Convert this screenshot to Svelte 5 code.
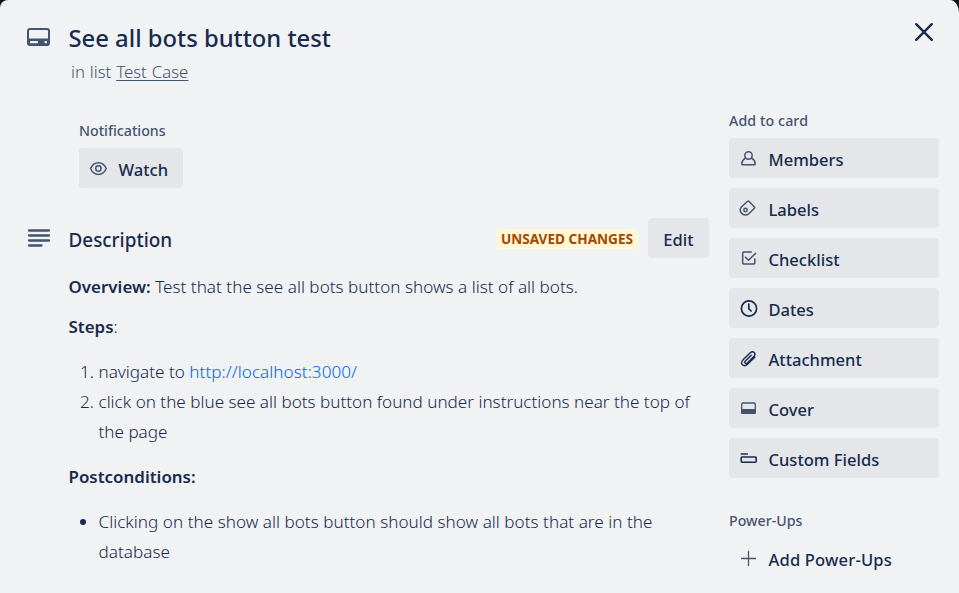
<script>
  const actions = ['Members', 'Labels', 'Checklist', 'Dates', 'Attachment', 'Cover', 'Custom Fields'];
</script>

{#snippet icon(name)}
  <svg class="icon" class:dark={['Dates', 'Attachment', 'Custom Fields'].includes(name)} viewBox="0 0 20 20" width="20" height="20" fill="none" stroke="currentColor" stroke-width="1.5" stroke-linecap="round" stroke-linejoin="round">
    {#if name === 'Members'}
      <circle cx="9.5" cy="6.5" r="3.7" />
      <path d="M6.4 9.1C4 10.6 2.8 12.7 2.8 14.7Q2.8 15.8 4 15.8H15Q16.2 15.8 16.2 14.7C16.2 12.7 15 10.6 12.6 9.1" />
    {:else if name === 'Labels'}
      <path d="M8.7 2.2Q9.3 1.6 9.9 2.2L15.4 7.9Q16 8.6 15.4 9.2L9.8 14.7A5 5 0 0 1 2.6 14.3A5 5 0 0 1 2.6 7.7Z" />
      <circle cx="6.5" cy="11" r="1.7" />
    {:else if name === 'Checklist'}
      <path d="M12.3 2.9H4.7Q3.7 2.9 3.7 3.9V14Q3.7 15 4.7 15H14.8Q15.8 15 15.8 14V10" />
      <path d="M6.5 8.3L9.5 11.3L16.5 4.4" />
    {:else if name === 'Dates'}
      <circle cx="10" cy="9.5" r="7.6" stroke-width="1.7" />
      <path d="M9.8 5V9.7L12.1 12" stroke-width="1.7" />
    {:else if name === 'Attachment'}
      <path d="M12.2 5.8L6.4 11.5Q5.2 12.9 6.3 13.8Q7.3 14.5 8.6 13.3L14.8 7.2Q17 4.8 15.2 3.1Q13.3 1.4 11 3.6L4.3 10.2Q1.4 13.4 3.4 15.4Q5.6 17.4 8.7 14.7L15.8 7.9" transform="translate(0 .4)" stroke-width="1.4" />
    {:else if name === 'Cover'}
      <rect x="2.7" y="4" width="13.6" height="10.3" rx="1.2" stroke-width="1.3" />
      <path d="M2.1 10H16.9V13.8Q16.9 15 15.7 15H3.3Q2.1 15 2.1 13.8Z" fill="currentColor" stroke="none" />
    {:else if name === 'Custom Fields'}
      <path d="M2.2 5H8.4" stroke-width="1.4" />
      <rect x="2.2" y="8" width="15" height="5.2" rx="1" stroke-width="1.6" />
    {:else if name === 'Watch'}
      <path d="M2.1 9.5C3.7 6.1 6.5 3.7 10 3.7S16.3 6.1 17.9 9.5C16.3 13 13.5 15.4 10 15.4S3.7 13 2.1 9.5Z" transform="translate(-.6 0)" />
      <circle cx="9.4" cy="9.5" r="2.7" />
    {:else if name === 'Add'}
      <path d="M9.5 2.5V16.5M2.5 9.5H16.5" stroke-width="1.3" />
    {/if}
  </svg>
{/snippet}

<div class="dialog">
  <header>
    <svg class="card-icon" viewBox="0 0 24 18" width="24" height="18">
      <rect x="1" y="1" width="21" height="16" rx="2" fill="none" stroke="#44546f" stroke-width="2" />
      <path d="M1 10.5H22V17H1Z" fill="#44546f" />
      <rect x="3" y="13" width="8" height="2.2" rx=".6" fill="#f1f2f4" />
      <rect x="17.5" y="13" width="2.5" height="2.2" rx=".6" fill="#f1f2f4" />
    </svg>
    <div class="heading">
      <h1>See all bots button test</h1>
      <p class="list">in list <u>Test Case</u></p>
    </div>
    <svg class="close" viewBox="0 0 20 20" width="20" height="20" stroke="#172b4d" stroke-width="2.4" stroke-linecap="round"><path d="M2.2 2.2L17.8 17.8M17.8 2.2L2.2 17.8" /></svg>
  </header>

  <div class="columns">
    <main>
      <section class="notifications">
        <h3>Notifications</h3>
        <button class="watch">{@render icon('Watch')}<span>Watch</span></button>
      </section>

      <div class="desc-head">
        <svg class="lines" viewBox="0 0 24 20" width="24" height="20" stroke="#44546f" stroke-width="2.3" stroke-linecap="round"><path d="M2 2.5H22M2 7.5H22M2 12.5H22M2 17.5H14.5" /></svg>
        <h2>Description</h2>
        <strong class="unsaved">UNSAVED CHANGES</strong>
        <button class="edit"><span>Edit</span></button>
      </div>

      <div class="description">
        <p><b>Overview:</b> Test that the see all bots button shows a list of all bots.</p>
        <p><b>Steps</b>:</p>
        <ol>
          <li>navigate to <a href="#localhost">http://localhost:3000/</a></li>
          <li>click on the blue see all bots button found under instructions near the top of<br />the page</li>
        </ol>
        <p><b>Postconditions:</b></p>
        <ul>
          <li>Clicking on the show all bots button should show all bots that are in the<br />database</li>
        </ul>
      </div>
    </main>

    <aside>
      <h3>Add to card</h3>
      <div class="actions">
        {#each actions as action}
          <button>{@render icon(action)}<span>{action}</span></button>
        {/each}
      </div>
      <h3 class="power">Power-Ups</h3>
      <button class="add">{@render icon('Add')}<span>Add Power-Ups</span></button>
    </aside>
  </div>
</div>

<style>
  :global(body) { background: #101214; }
  * { box-sizing: border-box; }
  .dialog {
    width: 959px;
    height: 593px;
    overflow: hidden;
    background: #f1f2f4;
    border-radius: 8px 9px 0 0 / 8px 13px 0 0;
    color: #172b4d;
    font: 400 17px/30px "Noto Sans", "Open Sans", sans-serif;
  }
  h1, h2, h3, p, ol, ul { margin: 0; padding: 0; white-space: nowrap; }
  header { display: flex; height: 110px; padding-left: 27px; }
  .card-icon { margin-top: 28px; }
  .heading { margin-left: 17.5px; flex: 1; }
  h1 { margin-top: 22px; font-size: 23.8px; line-height: 32px; font-weight: 500; }
  .list { margin: 3px 0 0 2.5px; color: #44546f; font-size: 16.8px; font-weight: 300; word-spacing: .6px; }
  .list u { text-underline-offset: 2px; text-decoration-thickness: 1px; }
  .close { margin: 22px 25px 0 0; }
  .columns { display: flex; }
  main { width: 682px; margin-left: 27px; }
  h3 { height: 20px; font-size: 14.2px; line-height: 20px; font-weight: 500; color: #44546f; }
  .notifications { padding: 11px 0 0 52px; }
  button {
    display: flex;
    align-items: center;
    width: 210px;
    height: 40px;
    padding: 2px 0 0 10px;
    border: 0;
    border-radius: 4px;
    background: #e4e6ea;
    color: #172b4d;
    font: 500 16.55px/24px "Noto Sans", "Open Sans", sans-serif;
    white-space: nowrap;
  }
  button span { padding-top: 1px; }
  .icon { flex: none; margin-top: -1px; margin-right: 9.5px; color: #44546f; }
  .icon.dark { color: #172b4d; }
  .watch { width: 104px; margin-top: 7px; }
  .desc-head { display: flex; align-items: center; height: 40px; margin-top: 30px; }
  h2 { margin: 5px 0 0 17.5px; font-size: 18.9px; line-height: 25px; font-weight: 500; }
  .unsaved { margin-left: auto; margin-top: 1px; width: 142px; height: 20px; border-radius: 4px; background: #fff7d6; color: #a54800; font-size: 13.6px; line-height: 20px; text-align: center; }
  .edit { width: 61px; margin-left: 10px; padding-left: 0; justify-content: center; }
  .description { padding: 14px 0 0 41.5px; font-size: 17.1px; font-weight: 300; }
  .description p { height: 30px; margin-bottom: 10px; letter-spacing: .02px; }
  b { font-weight: 600; font-size: 16.9px; }
  ol, ul { margin: 15px 0; padding-left: 30px; }
  ul { letter-spacing: .03px; }
  a { color: #0065f0; text-decoration: none; letter-spacing: .05px; }
  aside { margin-left: 20px; width: 210px; }
  aside h3 { margin-top: 1px; letter-spacing: .1px; }
  .actions { display: flex; flex-direction: column; gap: 10px; margin-top: 7px; }
  aside h3.power { margin-top: 33px; letter-spacing: 0; }
  .add { margin-top: 7px; background: transparent; letter-spacing: .18px; }
</style>
